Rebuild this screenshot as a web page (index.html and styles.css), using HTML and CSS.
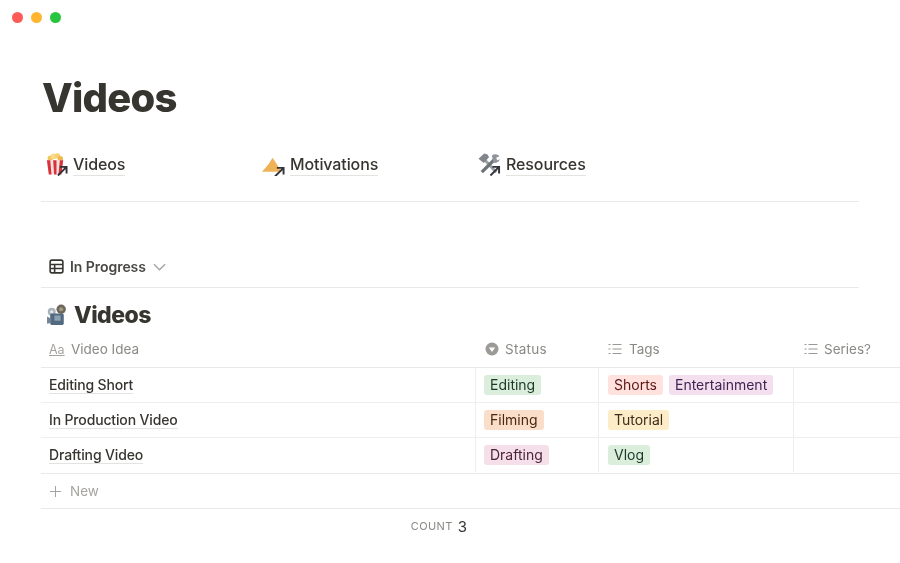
FILE: index.html
```html
<!DOCTYPE html>
<html lang="en">
<head>
<meta charset="utf-8">
<title>Videos</title>
<link rel="stylesheet" href="styles.css">
</head>
<body>
<div class="window">
  <div class="traffic">
    <span class="dot dot-red"></span>
    <span class="dot dot-yellow"></span>
    <span class="dot dot-green"></span>
  </div>
  <main class="page">
    <h1 class="title">Videos</h1>
    <nav class="links">
      <a class="link">
        <svg class="link-icon" viewBox="0 0 24 24">
          <circle cx="5.500" cy="5.500" r="2.800" fill="#f4c659"/><circle cx="9" cy="3.500" r="3" fill="#f8da8c"/><circle cx="13" cy="3" r="2.800" fill="#f6cf6e"/><circle cx="16" cy="6" r="2.800" fill="#efb950"/>
          <path d="M2 7.500h17l-2 15H4z" fill="#f7e3e0"/>
          <path d="M2 7.500h3.500l1.300 15H4zM8.500 7.500h3.500V22.500H9.500zM15.500 7.500h3.500l-2 15h-3z" fill="#d8333b"/>
          <g class="arrow"><path d="M13.500 23.500l8.500-8.500M15.500 14.500h7V21.500"/></g>
        </svg>
        <span class="link-text">Videos</span>
      </a>
      <a class="link link-mid">
        <svg class="link-icon" viewBox="0 0 24 24">
          <path d="M0 19.500L7 11.500 11 5l5 7.500 4 7z" fill="#efb257"/>
          <g class="arrow"><path d="M13.500 24.500l8.500-8.500M15.500 15.500h7V22.500"/></g>
        </svg>
        <span class="link-text">Motivations</span>
      </a>
      <a class="link">
        <svg class="link-icon" viewBox="0 0 24 24">
          <path d="M5 5l14 15" stroke="#9aa0a6" stroke-width="3" fill="none"/>
          <path d="M18 6L4 20" stroke="#6e7378" stroke-width="3.400" fill="none"/>
          <path d="M0.500 6l6-5.500 3.500 1 1.500 3-5.500 6z" fill="#80868c"/>
          <path d="M14.500 2.500a5.500 5.500 0 0 1 8 1l-3.500 1.500 1 2.500 3-1a5.500 5.500 0 0 1-7 3.500z" fill="#8f959b"/>
          <g class="arrow"><path d="M13 23.500l8.500-8.500M15 14.500h7V21.500"/></g>
        </svg>
        <span class="link-text">Resources</span>
      </a>
    </nav>
    <div class="view-tab">
      <svg class="view-icon" viewBox="0 0 16 16"><rect x="1.200" y="1.200" width="13.600" height="13.600" rx="2"/><path d="M1.200 5.800h13.600M1.200 10.200h13.600M6 5.800v9"/></svg>
      <span class="view-name">In Progress</span>
      <svg class="chevron" viewBox="0 0 14 8"><path d="M1 1l6 6 6-6"/></svg>
    </div>
    <h2 class="db-title">
      <svg class="db-icon" viewBox="0 0 22 22">
        <circle cx="5.500" cy="7.500" r="3.800" fill="#a9b4ba"/><circle cx="14.500" cy="5" r="4.500" fill="#6d675b"/>
        <circle cx="14.500" cy="5" r="2" fill="#a39a80"/><circle cx="5.500" cy="7.500" r="1.500" fill="#e6ebee"/>
        <rect x="4" y="9" width="13" height="11" rx="1.500" fill="#516a80"/>
        <path d="M1 12l4 2v4l-4 1z" fill="#6f8496"/><rect x="8" y="11" width="6" height="5" fill="#8ba0b0"/>
      </svg>
      <span>Videos</span>
    </h2>
    <div class="table">
      <div class="row row-head">
        <div class="cell cell-name">
          <span class="aa">Aa</span><span>Video Idea</span>
        </div>
        <div class="cell cell-status">
          <svg class="head-icon" viewBox="0 0 14 14"><circle cx="7" cy="7" r="6.500" fill="#9b9a97"/><path d="M3.800 5.500h6.400L7 10z" fill="#fff"/></svg>
          <span class="head-wide">Status</span>
        </div>
        <div class="cell cell-tags">
          <svg class="head-icon list-icon" viewBox="0 0 14 14"><path d="M0.500 2.500h2M4.500 2.500h9M0.500 7h2M4.500 7h9M0.500 11.500h2M4.500 11.500h9"/></svg>
          <span>Tags</span>
        </div>
        <div class="cell cell-series">
          <svg class="head-icon list-icon" viewBox="0 0 14 14"><path d="M0.500 2.500h2M4.500 2.500h9M0.500 7h2M4.500 7h9M0.500 11.500h2M4.500 11.500h9"/></svg>
          <span>Series?</span>
        </div>
      </div>
      <div class="row">
        <div class="cell cell-name"><span class="item">Editing Short</span></div>
        <div class="cell cell-status divided"><span class="tag tag-green">Editing</span></div>
        <div class="cell cell-tags divided"><span class="tag tag-red">Shorts</span><span class="tag tag-purple">Entertainment</span></div>
        <div class="cell cell-series divided"></div>
      </div>
      <div class="row">
        <div class="cell cell-name"><span class="item">In Production Video</span></div>
        <div class="cell cell-status divided"><span class="tag tag-orange">Filming</span></div>
        <div class="cell cell-tags divided"><span class="tag tag-yellow">Tutorial</span></div>
        <div class="cell cell-series divided"></div>
      </div>
      <div class="row row-last">
        <div class="cell cell-name"><span class="item">Drafting Video</span></div>
        <div class="cell cell-status divided"><span class="tag tag-pink">Drafting</span></div>
        <div class="cell cell-tags divided"><span class="tag tag-green">Vlog</span></div>
        <div class="cell cell-series divided"></div>
      </div>
    </div>
    <div class="new-row">
      <svg class="plus" viewBox="0 0 14 14"><path d="M7 1v12M1 7h12"/></svg>
      <span>New</span>
    </div>
    <div class="count"><span class="count-label">COUNT</span><span class="count-value">3</span></div>
  </main>
</div>
</body>
</html>
```
FILE: styles.css
```css
* { box-sizing: border-box; }
html, body { margin: 0; padding: 0; }
body {
  width: 900px;
  height: 563px;
  overflow: hidden;
  background: #fff;
  color: #37352f;
  font-family: Inter, "Liberation Sans", sans-serif;
}
.window { width: 900px; height: 563px; overflow: hidden; filter: blur(0.3px); }
.traffic { display: flex; gap: 8px; padding: 12px 0 0 12px; height: 23px; }
.dot { width: 11px; height: 11px; border-radius: 50%; }
.dot-red { background: #fc5b57; }
.dot-yellow { background: #fdb62e; }
.dot-green { background: #27c43f; }
.page { padding-left: 41px; }
.title {
  margin: 0;
  padding-left: 1px;
  height: 99px;
  padding-top: 49px;
  font-size: 40px;
  line-height: 52px;
  font-weight: 800;
  letter-spacing: -0.8px;
  color: #37352f;
}
.links { display: flex; width: 818px; height: 80px; padding-top: 30px; border-bottom: 1px solid #e9e9e7; }
.link { display: flex; align-items: center; gap: 5px; width: 217px; height: 24px; padding-left: 4px; }
.link-mid { width: 216px; }
.link-icon { width: 23px; height: 23px; flex: none; }
.arrow path { fill: none; stroke: #33333c; stroke-width: 2; }
.link-text {
  font-size: 16px;
  font-weight: 500;
  line-height: 22px;
  letter-spacing: -0.1px;
  border-bottom: 1px solid #e3e3e1;
}
.view-tab {
  display: flex;
  align-items: center;
  width: 818px;
  height: 86px;
  padding: 44px 0 0 8px;
  border-bottom: 1px solid #e9e9e7;
  font-size: 14px;
  font-weight: 600;
  letter-spacing: -0.05px;
}
.view-icon { width: 15px; height: 15px; fill: none; stroke: #37352f; stroke-width: 1.700; }
.view-name { margin-left: 6px; color: #494843; }
.chevron { width: 13px; height: 8px; margin-left: 7px; fill: none; stroke: #a5a4a1; stroke-width: 1.500; }
.db-title {
  display: flex;
  align-items: center;
  gap: 5px;
  margin: 0;
  height: 54px;
  padding: 0 0 0 5px;
  font-size: 23px;
  font-weight: 800;
  letter-spacing: -0.55px;
}
.db-icon { width: 23px; height: 23px; }
.table { width: 859px; }
.row { display: flex; height: 35px; border-bottom: 1px solid #eeeeed; font-size: 14px; }
.row-head { height: 26px; padding-bottom: 11px; color: #8a8985; font-size: 13.5px; border-bottom-color: #e9e9e7; }
.row-last { height: 36px; padding-bottom: 1px; border-bottom-color: #e9e9e7; }
.cell { display: flex; align-items: center; height: 100%; }
.cell-name { width: 434px; padding-left: 8px; }
.cell-status { width: 123px; padding-left: 8px; }
.cell-tags { width: 195px; padding-left: 9px; gap: 6px; }
.cell-series { flex: 1; padding-left: 10px; }
.divided { border-left: 1px solid #eeeeed; }
.row-head .cell-status { padding-left: 10px; }
.row-head .cell-status .head-icon { margin-right: 6px; }
.row-head .cell-tags { padding-left: 10px; gap: 0; }
.row-head .cell-series { padding-left: 11px; }
.row-head .cell-series .head-icon { margin-right: 6px; }
.head-wide { letter-spacing: 0.3px; }
.aa { width: 16px; margin-right: 6px; font-size: 12.5px; text-decoration: underline; color: #a5a4a1; }
.head-icon { width: 14px; height: 14px; margin-right: 7px; flex: none; }
.list-icon { fill: none; stroke: #999895; stroke-width: 1.200; }
.item { font-weight: 550; letter-spacing: -0.15px; border-bottom: 1px solid #e3e3e1; line-height: 17px; }
.tag { padding: 0 6px; height: 20px; line-height: 20px; border-radius: 3px; font-size: 14px; }
.tag-green { background: #dbeddb; color: #1c3829; }
.tag-red { background: #ffe2dd; color: #5d1715; }
.tag-purple { background: #f3dfee; color: #412454; }
.tag-orange { background: #fadec9; color: #49290e; }
.tag-yellow { background: #fdecc8; color: #402c1b; }
.tag-pink { background: #f5e0e9; color: #4c2337; }
.new-row {
  display: flex;
  align-items: center;
  width: 859px;
  height: 35px;
  padding-left: 8px;
  gap: 8px;
  border-bottom: 1px solid #e9e9e7;
  font-size: 13.5px;
  color: #a5a4a1;
}
.plus { width: 13px; height: 13px; fill: none; stroke: #a5a4a1; stroke-width: 1.100; }
.count { display: flex; align-items: center; width: 426px; justify-content: flex-end; height: 34px; gap: 5px; }
.count-label { font-size: 11px; letter-spacing: 0.4px; color: #8a8985; }
.count-value { font-size: 15px; color: #37352f; }
```
